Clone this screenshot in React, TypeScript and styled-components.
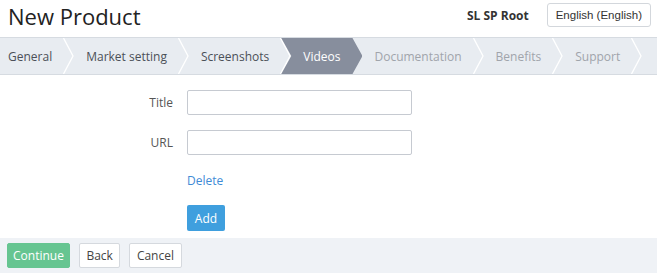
import React from "react";
import styled, { createGlobalStyle, css } from "styled-components";

const Global = createGlobalStyle`
  html, body { margin: 0; padding: 0; background: #fff; }
  body { font-family: "Open Sans", "DejaVu Sans", sans-serif; color: #333; }
  * { box-sizing: border-box; }
`;

const Page = styled.div`
  width: 657px;
  display: flex;
  flex-direction: column;
`;

const Header = styled.header`
  height: 37px;
  display: flex;
  align-items: center;
  justify-content: space-between;
  padding: 0 6px 0 8px;
`;

const Title = styled.h1`
  margin: 0;
  font-size: 22px;
  font-weight: 400;
  color: #222;
  line-height: 30px;
  margin-top: -5px;
`;

const HeaderRight = styled.div`
  display: flex;
  align-items: center;
  gap: 18px;
  margin-top: -7px;
`;

const Account = styled.span`
  font-size: 12px;
  font-weight: 700;
  color: #333;
`;

const LangButton = styled.button`
  height: 24px;
  padding: 0 8px;
  font-family: "Liberation Sans", Arial, sans-serif;
  font-size: 11.5px;
  color: #333;
  background: #fff;
  border: 1px solid #d3d7dc;
  border-radius: 3px;
`;

const TabBar = styled.nav`
  height: 38px;
  display: flex;
  background: #e8ecf1;
  border-top: 1px solid #d6dbe1;
  border-bottom: 1px solid #d6dbe1;
`;

type TabState = "done" | "active" | "todo";

const Tab = styled.div<{ $state: TabState; $first?: boolean }>`
  position: relative;
  height: 36px;
  display: flex;
  align-items: center;
  font-size: 12px;
  white-space: nowrap;
  margin-right: -10px;
  padding: 0 22px 0 ${(p) => (p.$first ? "8px" : "22px")};
  color: ${(p) => (p.$state === "done" ? "#4b5058" : p.$state === "todo" ? "#a0a4ab" : "#fff")};
  ${(p) =>
    p.$state === "active" &&
    css`
      background: #878e9d;
      clip-path: polygon(0 0, calc(100% - 10px) 0, 100% 50%, calc(100% - 10px) 100%, 0 100%, 10px 50%);
    `}
`;

const Sep = styled.svg`
  position: absolute;
  right: 0;
  top: 0;
  width: 11px;
  height: 36px;
`;

const Form = styled.div`
  display: flex;
  flex-direction: column;
  padding: 15px 0 7px 187px;
`;

const Row = styled.div`
  display: flex;
  align-items: center;
  position: relative;
  & + & { margin-top: 15px; }
`;

const Label = styled.label`
  position: absolute;
  right: calc(100% + 14px);
  font-size: 12px;
  color: #555;
  white-space: nowrap;
`;

const Input = styled.input`
  width: 225px;
  height: 25px;
  border: 1px solid #c6cad1;
  border-radius: 2px;
  outline: none;
  padding: 0 6px;
`;

const DeleteLink = styled.a`
  margin-top: 18px;
  font-size: 12px;
  line-height: 16px;
  color: #3f8bd6;
  cursor: pointer;
`;

const AddButton = styled.button`
  margin-top: 16px;
  width: 38px;
  height: 26px;
  border: none;
  border-radius: 2px;
  background: #3f9fde;
  color: #fff;
  font-family: inherit;
  font-size: 12px;
  padding: 0;
`;

const Footer = styled.footer`
  height: 35px;
  background: #eff2f6;
  display: flex;
  align-items: center;
  gap: 9px;
  padding: 0 7px;
`;

const FootButton = styled.button<{ $primary?: boolean }>`
  height: 25px;
  padding: 0 ${(p) => (p.$primary ? "5px" : "6.5px")};
  border-radius: 2px;
  font-family: inherit;
  font-size: 12px;
  border: 1px solid ${(p) => (p.$primary ? "#66c591" : "#d5d9de")};
  background: ${(p) => (p.$primary ? "#66c591" : "#fff")};
  color: ${(p) => (p.$primary ? "#fff" : "#444")};
`;

const tabs: { label: string; state: TabState }[] = [
  { label: "General", state: "done" },
  { label: "Market setting", state: "done" },
  { label: "Screenshots", state: "done" },
  { label: "Videos", state: "active" },
  { label: "Documentation", state: "todo" },
  { label: "Benefits", state: "todo" },
  { label: "Support", state: "todo" },
];

export default function App() {
  return (
    <Page>
      <Global />
      <Header>
        <Title>New Product</Title>
        <HeaderRight>
          <Account>SL SP Root</Account>
          <LangButton>English (English)</LangButton>
        </HeaderRight>
      </Header>
      <TabBar>
        {tabs.map((t, i) => (
          <Tab key={t.label} $state={t.state} $first={i === 0}>
            {t.label}
            {t.state !== "active" && (
              <Sep viewBox="0 0 11 36">
                <polyline points="0.5,0 10,18 0.5,36" fill="none" stroke="#fff" strokeWidth="1.3" />
              </Sep>
            )}
          </Tab>
        ))}
      </TabBar>
      <Form>
        <Row>
          <Label>Title</Label>
          <Input />
        </Row>
        <Row>
          <Label>URL</Label>
          <Input />
        </Row>
        <DeleteLink>Delete</DeleteLink>
        <div>
          <AddButton>Add</AddButton>
        </div>
      </Form>
      <Footer>
        <FootButton $primary>Continue</FootButton>
        <FootButton>Back</FootButton>
        <FootButton>Cancel</FootButton>
      </Footer>
    </Page>
  );
}
